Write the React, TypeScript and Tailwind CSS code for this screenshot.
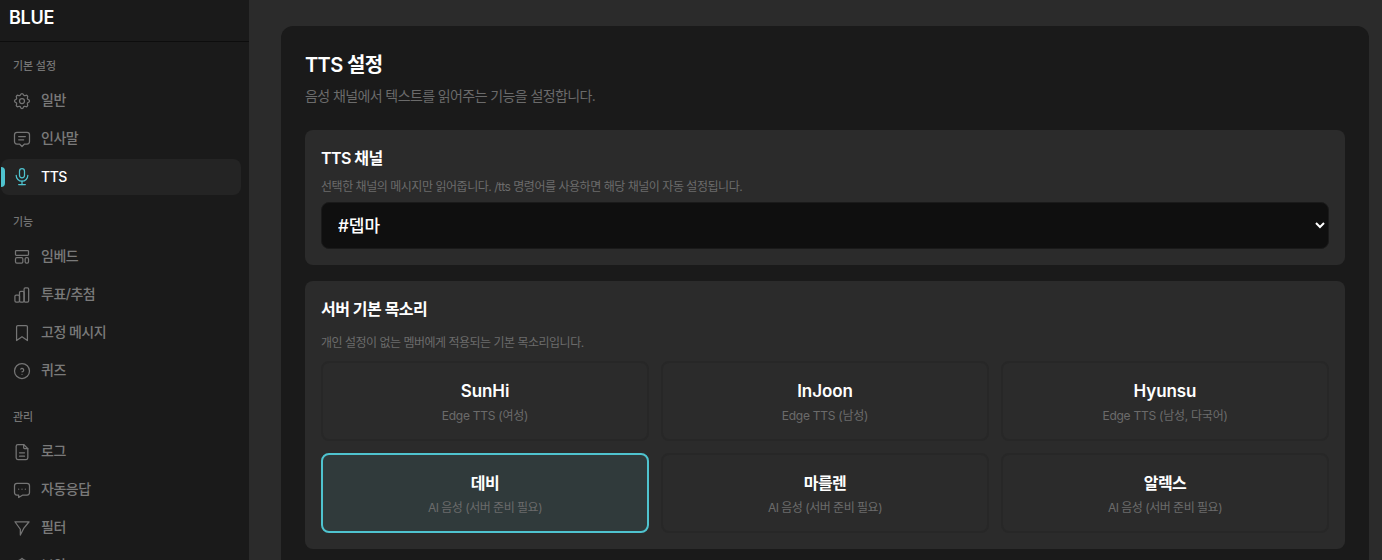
import { TbSettings, TbMessage2, TbMicrophone, TbHelpCircle, TbFileDescription, TbMessageDots, TbShield } from "react-icons/tb";
import type { ComponentType, ReactNode } from "react";

const font = "font-['Inter','Noto_Sans_CJK_KR',sans-serif]";

function EmbedIcon({ className }: { className?: string }) {
  return (
    <svg viewBox="0 0 24 24" fill="none" stroke="currentColor" strokeWidth="1.5" className={className}>
      <rect x="4.2" y="4.2" width="15.6" height="5.8" rx="1" />
      <rect x="4.2" y="12.8" width="8.8" height="6.400" rx="1.500" />
      <rect x="15.800" y="12.800" width="4" height="6.400" rx="1.500" />
    </svg>
  );
}

function BarsIcon({ className }: { className?: string }) {
  return (
    <svg viewBox="0 0 24 24" fill="none" stroke="currentColor" strokeWidth="1.5" className={className}>
      <rect x="3.500" y="12" width="5.500" height="8.500" rx="1.500" />
      <rect x="9" y="7.500" width="5.500" height="13" rx="1.500" />
      <rect x="14.500" y="3.500" width="5.500" height="17" rx="1.500" />
    </svg>
  );
}

function BookmarkIcon({ className }: { className?: string }) {
  return (
    <svg viewBox="0 0 24 24" fill="none" stroke="currentColor" strokeWidth="1.5" strokeLinejoin="round" className={className}>
      <path d="M5.500 4.500a1.500 1.500 0 0 1 1.500-1.500h10a1.500 1.500 0 0 1 1.500 1.500v16.500l-6.500-4.500-6.500 4.500z" />
    </svg>
  );
}

function FunnelIcon({ className }: { className?: string }) {
  return (
    <svg viewBox="0 0 24 24" fill="none" stroke="currentColor" strokeWidth="1.5" strokeLinejoin="round" className={className}>
      <path d="M3.500 4.500h17l-6.500 8-4 8v-7z" />
    </svg>
  );
}

function NavItem({ icon: Icon, label, active }: { icon: ComponentType<any>; label: string; active?: boolean }) {
  return (
    <div className={`relative flex h-9 items-center gap-[9px] rounded-lg pl-[11px] ${active ? "bg-[#242424] text-white" : "text-[#7a7a7a]"}`}>
      {active && <span className="absolute left-0 top-2 h-5 w-1 rounded-r bg-[#4fc3cf]" />}
      <Icon strokeWidth={1.5} className={`h-5 w-5 ${active ? "text-[#4fc3cf]" : "text-[#757575]"}`} />
      <span className={`text-sm font-medium tracking-[-0.5px] ${active ? "" : "-translate-y-px"}`}>{label}</span>
    </div>
  );
}

function Group({ title, children, className }: { title: string; children: ReactNode; className?: string }) {
  return (
    <div className={className}>
      <div className="flex h-[18px] items-center pl-3 text-[11px] font-medium tracking-[-0.1px] text-[#757575]">{title}</div>
      <div className="mt-2 flex flex-col gap-[2px]">{children}</div>
    </div>
  );
}

function Voice({ name, desc, selected, latin }: { name: string; desc: string; selected?: boolean; latin?: boolean }) {
  return (
    <div className={`flex h-20 flex-col items-center justify-center rounded-lg border-2 pt-px ${selected ? "border-[#4fc3cf] bg-[#303a3b]" : "border-[#272727]"}`}>
      <div className={`font-semibold leading-6 text-white ${latin ? "text-[17px] tracking-[-0.1px]" : "text-base tracking-[-0.5px]"}`}>{name}</div>
      <div className={`mt-[5px] text-xs leading-4 text-[#6b6b6b] ${latin ? "tracking-[-0.25px]" : "tracking-[-0.5px]"}`}>{desc}</div>
    </div>
  );
}

export default function App() {
  return (
    <div className={`flex h-screen overflow-hidden bg-[#2b2b2b] ${font}`}>
      <aside className="w-[249px] shrink-0 bg-[#1a1a1a]">
        <div className="flex h-[42px] items-start border-b border-[#0d0d0d] pl-[9px] pt-[7px] text-lg font-semibold leading-[22px] tracking-[-0.3px] text-white">BLUE</div>
        <div className="flex flex-col gap-[18px] pl-px pr-2 pt-[15px]">
          <Group title="기본 설정">
            <NavItem icon={TbSettings} label="일반" />
            <NavItem icon={TbMessage2} label="인사말" />
            <NavItem icon={TbMicrophone} label="TTS" active />
          </Group>
          <Group title="기능">
            <NavItem icon={EmbedIcon} label="임베드" />
            <NavItem icon={BarsIcon} label="투표/추첨" />
            <NavItem icon={BookmarkIcon} label="고정 메시지" />
            <NavItem icon={TbHelpCircle} label="퀴즈" />
          </Group>
          <Group title="관리" className="mt-px">
            <NavItem icon={TbFileDescription} label="로그" />
            <NavItem icon={TbMessageDots} label="자동응답" />
            <NavItem icon={FunnelIcon} label="필터" />
            <NavItem icon={TbShield} label="보안" />
          </Group>
        </div>
      </aside>
      <main className="flex-1 pl-8 pr-[13px] pt-[26px]">
        <div className="rounded-xl bg-[#1a1a1a] p-6">
          <h1 className="text-xl font-semibold leading-[30px] tracking-[-0.6px] text-white">TTS 설정</h1>
          <p className="mt-[6px] text-sm leading-5 tracking-[-0.6px] text-[#6b6b6b]">음성 채널에서 텍스트를 읽어주는 기능을 설정합니다.</p>
          <section className="mt-6 rounded-lg bg-[#2b2b2b] p-4">
            <h2 className="text-base font-semibold leading-6 tracking-[-0.55px] text-white">TTS 채널</h2>
            <p className="mt-[9px] text-xs leading-4 tracking-[-0.47px] text-[#6b6b6b]">선택한 채널의 메시지만 읽어줍니다. /tts 명령어를 사용하면 해당 채널이 자동 설정됩니다.</p>
            <select className="mt-[7px] h-[47px] w-full rounded-lg border border-[#1a1a1a] bg-[#0f0f0f] px-3 text-[17px] font-medium text-white [color-scheme:dark]" defaultValue="deme">
              <option value="deme">#뎁마</option>
            </select>
          </section>
          <section className="mt-4 rounded-lg bg-[#2b2b2b] p-4">
            <h2 className="text-base font-semibold leading-6 tracking-[-0.55px] text-white">서버 기본 목소리</h2>
            <p className="mt-[14px] text-xs leading-4 tracking-[-0.5px] text-[#6b6b6b]">개인 설정이 없는 멤버에게 적용되는 기본 목소리입니다.</p>
            <div className="mt-[10px] grid grid-cols-3 gap-3">
              <Voice name="SunHi" desc="Edge TTS (여성)" latin />
              <Voice name="InJoon" desc="Edge TTS (남성)" latin />
              <Voice name="Hyunsu" desc="Edge TTS (남성, 다국어)" latin />
              <Voice name="데비" desc="AI 음성 (서버 준비 필요)" selected />
              <Voice name="마를렌" desc="AI 음성 (서버 준비 필요)" />
              <Voice name="알렉스" desc="AI 음성 (서버 준비 필요)" />
            </div>
          </section>
        </div>
      </main>
    </div>
  );
}
